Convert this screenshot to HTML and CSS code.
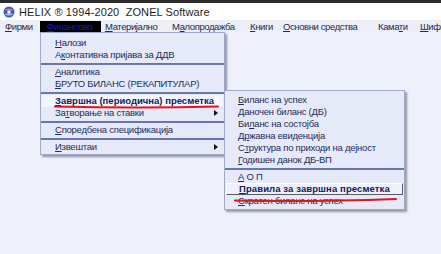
FILE: index.html
```html
<!DOCTYPE html>
<html lang="mk">
<head>
  <meta charset="UTF-8">
  <title>HELIX</title>
  <link rel="stylesheet" href="styles.css">
</head>
<body>
  <div class="screen">
    <div class="topstrip"></div>

    <div class="titlebar">
      <svg class="appicon" width="12" height="12" viewBox="0 0 12 12">
        <circle cx="6" cy="6" r="5.5" fill="#3b5fc4"/>
        <path d="M1.5 4 Q6 1 10.5 4 Q6 6 1.5 4Z" fill="#e06fa8"/>
        <path d="M1.5 8 Q6 11 10.5 8 Q6 6.5 1.5 8Z" fill="#9fc3f0"/>
        <circle cx="6" cy="6" r="1.6" fill="#fff"/>
      </svg>
      <span class="title">HELIX ® 1994-2020&nbsp;&nbsp;ZONEL Software</span>
    </div>

    <div class="menubar">
      <span class="mb-item w1"><u>Ф</u>ирми</span>
      <span class="mb-item active"><u>Ф</u>инансово</span>
      <span class="mb-item w2"><u>М</u>атеријално</span>
      <span class="mb-item w3">М<u>а</u>лопродажба</span>
      <span class="mb-item w4"><u>К</u>ниги</span>
      <span class="mb-item w5"><u>О</u>сновни средства</span>
      <span class="mb-item w6">Кама<u>т</u>и</span>
      <span class="mb-item w7"><u>Ш</u>ифр</span>
    </div>

    <div class="workspace">
      <!-- падачко мени Финансово -->
      <div class="menu main-menu">
        <div class="item"><u>Н</u>алози</div>
        <div class="item">А<u>к</u>онтативна пријава за ДДВ</div>
        <div class="sep"></div>
        <div class="item"><u>А</u>налитика</div>
        <div class="item"><u>Б</u>РУТО БИЛАНС (РЕКАПИТУЛАР)</div>
        <div class="sep"></div>
        <div class="item selected"><u>З</u>авршна (периодична) пресметка<span class="arrow light"></span></div>
        <div class="item">За<u>т</u>ворање на ставки<span class="arrow"></span></div>
        <div class="sep"></div>
        <div class="item"><u>С</u>поредбена спецификација</div>
        <div class="sep"></div>
        <div class="item"><u>И</u>звештаи<span class="arrow"></span></div>
      </div>

      <!-- подмени Завршна пресметка -->
      <div class="menu sub-menu">
        <div class="item"><u>Б</u>иланс на успех</div>
        <div class="item"><u>Д</u>аночен биланс (ДБ)</div>
        <div class="item">Би<u>л</u>анс на состојба</div>
        <div class="item"><u>Др</u>жавна евиденција</div>
        <div class="item">С<u>т</u>руктура по приходи на дејност</div>
        <div class="item"><u>Г</u>одишен данок ДБ-ВП</div>
        <div class="sep"></div>
        <div class="item"><u>А</u> О П</div>
        <div class="item pressed"><u>П</u>равила за завршна пресметка</div>
        <div class="item"><u>С</u>кратен биланс на успех</div>
      </div>

      <svg class="marks" width="441" height="254" viewBox="0 0 441 254">
        <path d="M55 106.5 Q140 108.5 218 106.5" stroke="#e8121b" stroke-width="2" fill="none" stroke-linecap="round"/>
        <path d="M235 200.5 Q310 202 396 199" stroke="#e8121b" stroke-width="2" fill="none" stroke-linecap="round"/>
      </svg>
    </div>
  </div>
</body>
</html>
```

FILE: styles.css
```css
body {
  margin: 0;
  padding: 0;
  background-color: #eef1fb;
  font-family: "Liberation Sans", Arial, sans-serif;
}

.screen {
  width: 441px;
  height: 254px;
  overflow: hidden;
  position: relative;
  background-color: #eef1fb;
}

.topstrip {
  height: 3px;
  background-color: #2b2b2b;
}

.titlebar {
  height: 17px;
  background-color: #ffffff;
  display: flex;
  align-items: center;
  padding-left: 3px;
}

.appicon {
  margin-right: 4px;
}

.title {
  font-size: 11px;
  color: #1e1e1e;
  letter-spacing: 0.1px;
}

.menubar {
  height: 13px;
  background-color: #eceff8;
  display: flex;
  align-items: center;
  font-size: 9.5px;
  color: #1f2a55;
  padding-left: 5px;
  letter-spacing: -0.4px;
  overflow: hidden;
}

.mb-item {
  white-space: nowrap;
  flex: none;
}

.mb-item.w1 { width: 35px; }
.mb-item.w2 { width: 67px; }
.mb-item.w3 { width: 78px; }
.mb-item.w4 { width: 33px; }
.mb-item.w5 { width: 95px; }
.mb-item.w6 { width: 42px; }
.mb-item.w7 { width: 21px; overflow: hidden; }

.mb-item.active {
  background-color: #000000;
  color: #1a1ab8;
  width: 54px;
  height: 12px;
  line-height: 12px;
  padding-left: 7px;
  margin-right: 4px;
}

.workspace {
  position: relative;
  height: 221px;
}

.menu {
  position: absolute;
  background-color: #e5e9f8;
  border: 1px solid #9ea8c8;
  box-shadow: 2px 2px 2px rgba(40, 40, 60, 0.45);
  font-size: 9.5px;
  color: #1f2c60;
  letter-spacing: -0.25px;
}

.main-menu {
  left: 40px;
  top: -1px;
  width: 183px;
  padding: 4px 0 1px 0;
}

.sub-menu {
  left: 224px;
  top: 57px;
  width: 179px;
  padding: 3px 0 2px 0;
}

.item {
  height: 12px;
  line-height: 12px;
  white-space: nowrap;
  position: relative;
}

.main-menu .item {
  padding-left: 14px;
}

.sub-menu .item {
  padding-left: 13px;
}

.item.selected {
  font-weight: bold;
  color: #14205a;
  background-color: #f4f6fd;
  margin: 0 1px;
  letter-spacing: 0;
  padding-left: 13px !important;
}

.item.pressed {
  font-weight: bold;
  color: #14205a;
  background-color: #eef1fc;
  border-top: 1px solid #ffffff;
  border-left: 1px solid #ffffff;
  border-right: 1px solid #5a5a66;
  border-bottom: 1px solid #5a5a66;
  height: 10px;
  line-height: 10px;
  margin: 0 1px;
  letter-spacing: 0.1px;
  padding-left: 12px !important;
}

.sep {
  height: 5px;
  display: flex;
  align-items: center;
}

.sep::after {
  content: "";
  display: block;
  width: 100%;
  height: 2px;
  background-color: #6a76aa;
}

.arrow {
  position: absolute;
  right: 6px;
  top: 3px;
  width: 0;
  height: 0;
  border-top: 3px solid transparent;
  border-bottom: 3px solid transparent;
  border-left: 4px solid #111111;
}

.arrow.light {
  border-left-color: #ffffff;
  right: 4px;
}

.marks {
  position: absolute;
  left: 0;
  top: -33px;
  pointer-events: none;
}
```
